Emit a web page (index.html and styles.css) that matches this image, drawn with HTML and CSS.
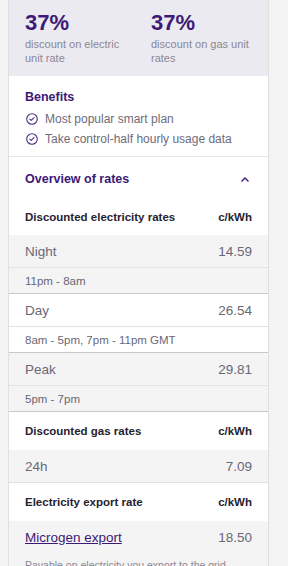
FILE: index.html
```html
<!DOCTYPE html>
<html>
<head>
<meta charset="utf-8">
<link rel="stylesheet" href="styles.css">
</head>
<body>
<div class="card">
  <div class="summary">
    <div class="stat">
      <div class="pct">37%</div>
      <div class="cap">discount on electric<br>unit rate</div>
    </div>
    <div class="stat">
      <div class="pct">37%</div>
      <div class="cap">discount on gas unit<br>rates</div>
    </div>
  </div>
  <div class="benefits">
    <div class="btitle">Benefits</div>
    <div class="bitem"><svg class="chk" width="12" height="12" viewBox="0 0 12 12"><circle cx="6" cy="6" r="5.3" fill="none" stroke="#4a2f85" stroke-width="1.1"/><path d="M3.8 6.1 L5.3 7.4 L8.1 4.6" fill="none" stroke="#4a2f85" stroke-width="1.1" stroke-linecap="round" stroke-linejoin="round"/></svg><span>Most popular smart plan</span></div>
    <div class="bitem"><svg class="chk" width="12" height="12" viewBox="0 0 12 12"><circle cx="6" cy="6" r="5.3" fill="none" stroke="#4a2f85" stroke-width="1.1"/><path d="M3.8 6.1 L5.3 7.4 L8.1 4.6" fill="none" stroke="#4a2f85" stroke-width="1.1" stroke-linecap="round" stroke-linejoin="round"/></svg><span>Take control-half hourly usage data</span></div>
  </div>
  <div class="overview">
    <span>Overview of rates</span>
    <svg width="10" height="7" viewBox="0 0 10 7"><path d="M1.5 5.5 L5 2 L8.5 5.5" fill="none" stroke="#3d1a78" stroke-width="1.4"/></svg>
  </div>
  <div class="thead"><span>Discounted electricity rates</span><span>c/kWh</span></div>
  <div class="block grey">
    <div class="row"><span>Night</span><span>14.59</span></div>
    <div class="sub">11pm - 8am</div>
  </div>
  <div class="block">
    <div class="row"><span>Day</span><span>26.54</span></div>
    <div class="sub">8am - 5pm, 7pm - 11pm GMT</div>
  </div>
  <div class="block grey">
    <div class="row"><span>Peak</span><span>29.81</span></div>
    <div class="sub">5pm - 7pm</div>
  </div>
  <div class="thead gas"><span>Discounted gas rates</span><span>c/kWh</span></div>
  <div class="block grey single">
    <div class="row"><span>24h</span><span>7.09</span></div>
  </div>
  <div class="thead gas"><span>Electricity export rate</span><span>c/kWh</span></div>
  <div class="block grey last">
    <div class="row"><a href="#" class="link">Microgen export</a><span>18.50</span></div>
    <div class="note">Payable on electricity you export to the grid</div>
  </div>
</div>
</body>
</html>
```
FILE: styles.css
```css
html, body { margin: 0; padding: 0; }
body {
  background: #f3f3f3;
  font-family: "Liberation Sans", Arial, sans-serif;
  padding-left: 8px;
  width: 261px;
  overflow: hidden;
  height: 566px;
}
.card {
  background: #fff;
  border-left: 1px solid #e0e0e0;
  border-right: 1px solid #e0e0e0;
  width: 259px;
}
.summary {
  background: #ebeaf0;
  height: 76px;
  box-sizing: border-box;
  padding: 11px 16px 0 16px;
  display: grid;
  grid-template-columns: 126px 1fr;
}
.pct {
  font-size: 22px;
  font-weight: 700;
  color: #3d1a78;
  line-height: 24px;
}
.cap {
  font-size: 11px;
  line-height: 13.5px;
  color: #8b8794;
  margin-top: 3px;
  white-space: nowrap;
}
.benefits {
  padding: 13px 16px 0 16px;
  height: 81px;
  box-sizing: border-box;
  border-bottom: 1px solid #e6e6e6;
}
.btitle {
  font-size: 12.5px;
  font-weight: 700;
  color: #3d1a78;
  line-height: 16px;
  margin-bottom: 4px;
}
.bitem {
  display: flex;
  align-items: center;
  gap: 7px;
  font-size: 12px;
  color: #6e6b7b;
  height: 20px;
  padding-left: 1px;
}
.chk { flex: none; }
.overview {
  height: 42px;
  display: flex;
  align-items: center;
  justify-content: space-between;
  padding: 2px 18px 0 16px;
  box-sizing: border-box;
  font-size: 12.5px;
  font-weight: 700;
  color: #3d1a78;
}
.thead {
  height: 36px;
  display: flex;
  align-items: center;
  justify-content: space-between;
  padding: 0 16px;
  font-size: 11.5px;
  font-weight: 700;
  color: #26232f;
}
.thead.gas { height: 38px; }
.block { border-bottom: 1px solid #c9c9cc; }
.block.grey { background: #f4f4f4; }
.block.single { border-bottom: 1px solid #e2e2e2; }
.block.last { border-bottom: none; }
.row {
  height: 32px;
  display: flex;
  align-items: center;
  justify-content: space-between;
  padding: 0 16px;
  font-size: 13.5px;
  color: #6a6776;
}
.sub {
  border-top: 1px solid #e2e2e2;
  height: 25px;
  display: flex;
  align-items: center;
  padding: 0 16px;
  font-size: 11.5px;
  color: #6a6776;
}
.link {
  color: #3d1a78;
  text-decoration: underline;
}
.note {
  padding: 6px 16px 0 16px;
  font-size: 10.5px;
  color: #8b8794;
}
```
